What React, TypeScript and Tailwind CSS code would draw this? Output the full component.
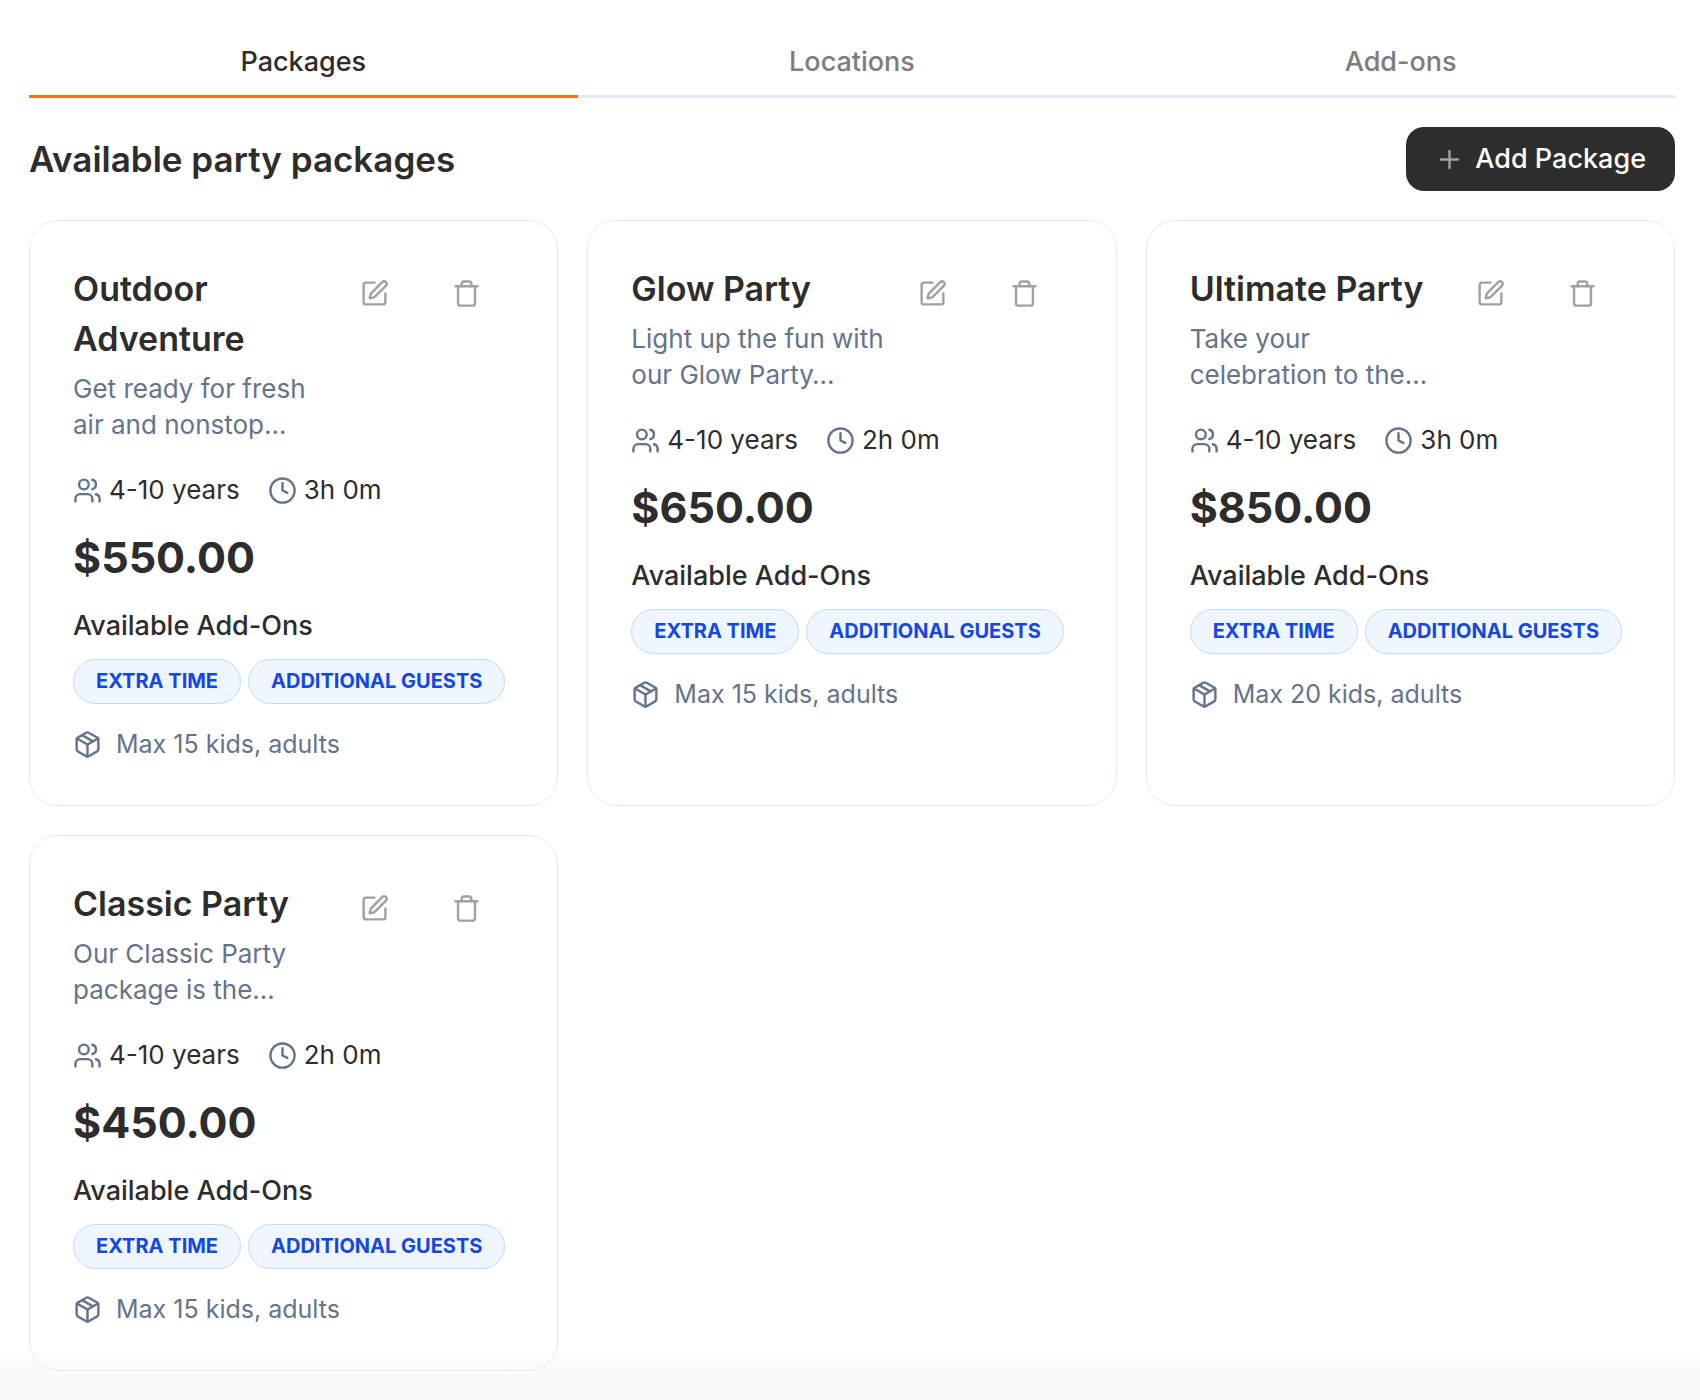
import React, { useState } from "react";
import { Clock, Package, Plus, SquarePen, Trash, Users } from "lucide-react";

type PartyPackage = {
  name: string;
  description: string;
  ages: string;
  duration: string;
  price: string;
  addOns: string[];
  capacity: string;
};

const addOns = ["EXTRA TIME", "ADDITIONAL GUESTS"];

const packages: PartyPackage[] = [
  { name: "Outdoor\nAdventure", description: "Get ready for fresh\nair and nonstop…", ages: "4-10 years", duration: "3h 0m", price: "$550.00", addOns, capacity: "Max 15 kids, adults" },
  { name: "Glow Party", description: "Light up the fun with\nour Glow Party…", ages: "4-10 years", duration: "2h 0m", price: "$650.00", addOns, capacity: "Max 15 kids, adults" },
  { name: "Ultimate Party", description: "Take your\ncelebration to the…", ages: "4-10 years", duration: "3h 0m", price: "$850.00", addOns, capacity: "Max 20 kids, adults" },
  { name: "Classic Party", description: "Our Classic Party\npackage is the…", ages: "4-10 years", duration: "2h 0m", price: "$450.00", addOns, capacity: "Max 15 kids, adults" },
];

const tabs = ["Packages", "Locations", "Add-ons"];

function PackageCard({ item }: { item: PartyPackage }) {
  return (
    <article className="rounded-[29px] border border-[#e0eaf8] p-[43px]">
      <div className="flex items-start justify-between">
        <div className="whitespace-pre">
          <h3 className="text-[34px] leading-[50px] font-semibold">{item.name}</h3>
          <p className="mt-[7px] text-[26px] leading-[36px] text-[#64748b]">{item.description}</p>
        </div>
        <div className="-ml-12 flex shrink-0 pr-0.5">
          <button type="button" aria-label="Edit package" className="flex h-[58px] w-[92px] items-center justify-center text-[#a1a1a1]">
            <SquarePen size={29} strokeWidth={2} />
          </button>
          <button type="button" aria-label="Delete package" className="flex h-[58px] w-[92px] items-center justify-center text-[#a1a1a1]">
            <Trash size={29} strokeWidth={2} />
          </button>
        </div>
      </div>
      <div className="mt-[29px] flex items-center gap-[28px] text-[26px] leading-[36px]">
        <span className="flex items-center gap-[7px]">
          <Users size={29} strokeWidth={2} className="text-[#64748b]" />
          {item.ages}
        </span>
        <span className="flex items-center gap-[7px]">
          <Clock size={29} strokeWidth={2} className="text-[#64748b]" />
          {item.duration}
        </span>
      </div>
      <p className="mt-[13px] text-[43px] leading-[72px] font-bold">{item.price}</p>
      <h4 className="mt-[15px] text-[27px] leading-[36px] font-medium">Available Add-Ons</h4>
      <ul className="mt-[15px] flex gap-[7px]">
        {item.addOns.map((addOn) => (
          <li key={addOn} className="rounded-full border border-[#bedbff] bg-[#eff6ff] px-[22px] text-[20px] leading-[43px] font-bold whitespace-nowrap text-[#1447e6]">
            {addOn}
          </li>
        ))}
      </ul>
      <p className="mt-[22px] flex items-center gap-[14px] text-[25px] leading-[36px] text-[#64748b]">
        <Package size={29} strokeWidth={2} />
        {item.capacity}
      </p>
    </article>
  );
}

export default function App() {
  const [active, setActive] = useState("Packages");
  return (
    <main className="min-h-screen bg-linear-to-b from-white from-96% to-[#f7f7f7] pt-[29px] pr-[25px] pb-6 pl-[29px] font-['Inter',sans-serif] text-[#2d2d2d]">
      <div role="tablist" className="grid grid-cols-3">
        {tabs.map((tab) => (
          <button
            key={tab}
            type="button"
            role="tab"
            aria-selected={tab === active}
            onClick={() => setActive(tab)}
            className={
              tab === active
                ? "border-b-3 border-[#f97316] pt-[15px] pb-[15px] text-[27px] leading-[36px] font-medium"
                : "border-b-3 border-[#e2ecf7] pt-[15px] pb-[15px] text-[27px] leading-[36px] font-medium text-[#7d7d7d]"
            }
          >
            {tab}
          </button>
        ))}
      </div>
      <header className="mt-[29px] flex items-center justify-between">
        <h2 className="text-[35px] leading-[50px] font-semibold">Available party packages</h2>
        <button type="button" className="flex h-16 items-center gap-[11px] rounded-[18px] bg-[#2d2d2d] px-[29px] text-[27px] leading-[36px] font-medium text-white">
          <Plus size={29} strokeWidth={2} className="text-[#a1a1a1]" />
          Add Package
        </button>
      </header>
      <section className="mt-[29px] grid grid-cols-3 gap-[29px]">
        {packages.map((item) => (
          <PackageCard key={item.name} item={item} />
        ))}
      </section>
    </main>
  );
}
